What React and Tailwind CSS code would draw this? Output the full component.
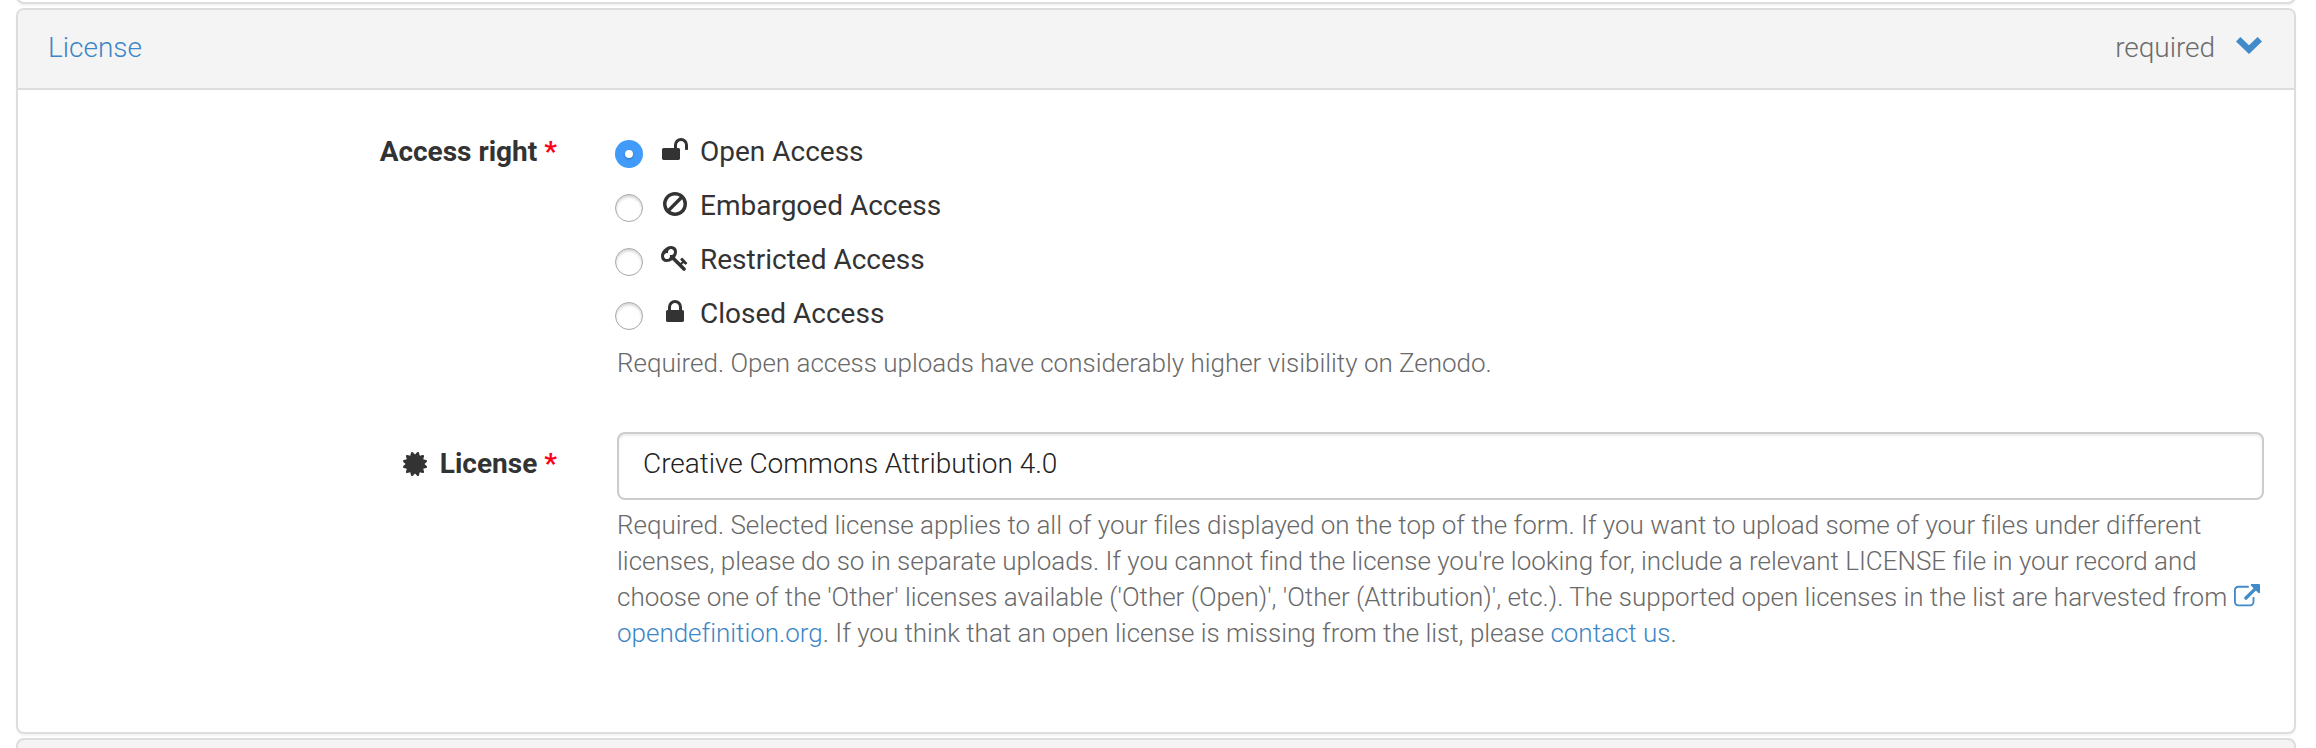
const icons = {
  unlock:
    "M1728 576v256q0 26-19 45t-45 19h-64q-26 0-45-19t-19-45v-256q0-106-75-181t-181-75-181 75-75 181v192h96q40 0 68 28t28 68v576q0 40-28 68t-68 28h-960q-40 0-68-28t-28-68v-576q0-40 28-68t68-28h672v-192q0-185 131.5-316.5t316.5-131.5 316.5 131.5 131.5 316.5z",
  ban: "M1440 893q0-161-87-295l-754 753q137 89 297 89 111 0 211.5-43.5t173.5-116.5 116-174.5 43-212.5zm-999 299l755-754q-135-91-300-91-148 0-273 73t-198 199-73 274q0 162 89 299zm1223-299q0 157-61 300t-163.5 246-245 164-298.5 61-298.5-61-245-164-163.5-246-61-300 61-299.5 163.5-245.5 245-164 298.5-61 298.5 61 245 164 163.5 245.5 61 299.5z",
  key: "M832 512q0-80-56-136t-136-56-136 56-56 136q0 42 19 83-41-19-83-19-80 0-136 56t-56 136 56 136 136 56 136-56 56-136q0-42-19-83 41 19 83 19 80 0 136-56t56-136zm851 704q0 17-49 66t-66 49q-9 0-28.5-16t-36.5-33-38.5-40-24.5-26l-96 96 220 220q28 28 28 68 0 42-39 81t-81 39q-40 0-68-28l-671-671q-176 131-365 131-163 0-265.5-102.5t-102.5-265.5q0-160 95-313t248-248 313-95q163 0 265.5 102.5t102.5 265.5q0 189-131 365l355 355 96-96q-3-3-26-24.5t-40-38.5-33-36.5-16-28.5q0-17 49-66t66-49q13 0 23 10 6 6 46 44.5t82 79.5 86.5 86 73 78 28.5 41z",
  lock: "M640 768h512v-192q0-106-75-181t-181-75-181 75-75 181v192zm832 96v576q0 40-28 68t-68 28h-960q-40 0-68-28t-28-68v-576q0-40 28-68t68-28h32v-192q0-184 132-316t316-132 316 132 132 316v192h32q40 0 68 28t28 68z",
  certificate:
    "M1504 896l138 135q30 28 20 70-12 41-52 51l-188 48 53 186q12 41-19 70-29 31-70 19l-186-53-48 188q-10 40-51 52-12 2-19 2-31 0-51-22l-135-138-135 138q-28 30-70 20-41-11-51-52l-48-188-186 53q-41 12-70-19-31-29-19-70l53-186-188-48q-40-10-52-51-10-42 20-70l138-135-138-135q-30-28-20-70 12-41 52-51l188-48-53-186q-12-41 19-70 29-31 70-19l186 53 48-188q10-41 51-51 41-12 70 19l135 139 135-139q29-30 70-19 41 10 51 51l48 188 186-53q41-12 70 19 31 29 19 70l-53 186 188 48q40 10 52 51 10 42-20 70z",
  external:
    "M1408 928v320q0 119-84.5 203.5t-203.5 84.5h-832q-119 0-203.5-84.5t-84.5-203.5v-832q0-119 84.5-203.5t203.5-84.5h704q14 0 23 9t9 23v64q0 14-9 23t-23 9h-704q-66 0-113 47t-47 113v832q0 66 47 113t113 47h832q66 0 113-47t47-113v-320q0-14 9-23t23-9h64q14 0 23 9t9 23zm384-864v512q0 26-19 45t-45 19-45-19l-176-176-652 652q-10 10-23 10t-23-10l-114-114q-10-10-10-23t10-23l652-652-176-176q-19-19-19-45t19-45 45-19h512q26 0 45 19t19 45z",
};

function Icon({ name, className }) {
  return (
    <svg viewBox="0 0 1792 1792" fill="currentColor" className={className} aria-hidden="true">
      <path d={icons[name]} />
    </svg>
  );
}

function Radio({ checked }) {
  return checked ? (
    <span className="flex size-7 items-center justify-center rounded-full bg-[#419bf9]">
      <span className="size-2 rounded-full bg-white shadow-[0_1px_2px_rgba(0,0,0,0.3)]" />
    </span>
  ) : (
    <span className="size-7 rounded-full border border-[#a8a8a8] bg-white shadow-[inset_0_2px_3px_rgba(0,0,0,0.18)]" />
  );
}

const options = [
  { icon: "unlock", label: "Open Access", checked: true },
  { icon: "ban", label: "Embargoed Access" },
  { icon: "key", label: "Restricted Access" },
  { icon: "lock", label: "Closed Access" },
];

function Star() {
  return <span className="ml-[7px] text-[#ff0018]">*</span>;
}

export default function App() {
  return (
    <div className="flex h-[748px] w-[2316px] flex-col gap-1 overflow-hidden bg-white pr-5 pl-4 font-['Roboto',sans-serif] text-[28px] leading-10 font-light text-[#333]">
      <div className="-mt-4 h-5 shrink-0 rounded-b-lg border-2 border-[#ddd] bg-white shadow-[0_2px_2px_rgba(0,0,0,0.05)]" />

      <section className="h-[726px] shrink-0 rounded-lg border-2 border-[#ddd] bg-white shadow-[0_2px_2px_rgba(0,0,0,0.05)]">
        <header className="flex h-20 items-start justify-between rounded-t-md border-b-2 border-[#ddd] bg-[#f4f4f4] pt-[18px] pr-8 pl-[30px]">
          <a className="text-[#3d86c6]">License</a>
          <div className="flex items-start text-[#6c6c6c]">
            <span className="tracking-[-0.05px]">required</span>
            <svg viewBox="0 0 26 17" className="mt-[9px] ml-[21px] h-[17px] w-[26px]" fill="#428bca">
              <path d="M0 4.4 4.4 0 13 8.2 21.6 0 26 4.4 13 17z" />
            </svg>
          </div>
        </header>

        <div className="grid grid-cols-[539px_1647px] gap-x-[60px] pt-[42px]">
          <div className="text-right font-bold">
            Access right
            <Star />
          </div>
          <div>
            <div className="flex flex-col gap-3.5">
              {options.map((o) => (
                <label key={o.label} className="-ml-0.5 flex h-10 items-center font-normal">
                  <span className="mt-1 flex">
                    <Radio checked={o.checked} />
                  </span>
                  <Icon name={o.icon} className="mb-1 ml-[17.5px] size-7" />
                  <span className="ml-[11.5px]">{o.label}</span>
                </label>
              ))}
            </div>
            <p className="mt-[11px] text-[26px] leading-9 tracking-[-0.014px] text-[#696969]">
              Required. Open access uploads have considerably higher visibility on Zenodo.
            </p>
          </div>

          <div className="mt-[51px] flex items-center justify-end self-start pt-3 font-bold">
            <Icon name="certificate" className="mr-[11px] size-7" />
            License
            <Star />
          </div>
          <div className="mt-[51px]">
            <div className="h-[68px] rounded-lg border-2 border-[#ccc] bg-white pt-[10px] pl-6 tracking-[-0.03px] text-[#222] shadow-[inset_0_2px_2px_rgba(0,0,0,0.075)]">
              Creative Commons Attribution 4.0
            </div>
            <p className="mt-[7px] text-[26px] leading-9 tracking-[-0.014px] whitespace-nowrap text-[#696969]">
              Required. Selected license applies to all of your files displayed on the top of the form. If you want to upload some of your files under different
              <br />
              licenses, please do so in separate uploads. If you cannot find the license you're looking for, include a relevant LICENSE file in your record and
              <br />
              choose one of the 'Other' licenses available ('Other (Open)', 'Other (Attribution)', etc.). The supported open licenses in the list are harvested from{" "}
              <Icon name="external" className="inline size-[26px] align-[-4px] text-[#428bca]" />
              <br />
              <a className="text-[#3d86c6]">opendefinition.org</a>. If you think that an open license is missing from the list, please{" "}
              <a className="text-[#3d86c6]">contact us</a>.
            </p>
          </div>
        </div>
      </section>

      <div className="h-20 shrink-0 rounded-t-lg border-2 border-[#ddd] bg-[#f4f4f4]" />
    </div>
  );
}
